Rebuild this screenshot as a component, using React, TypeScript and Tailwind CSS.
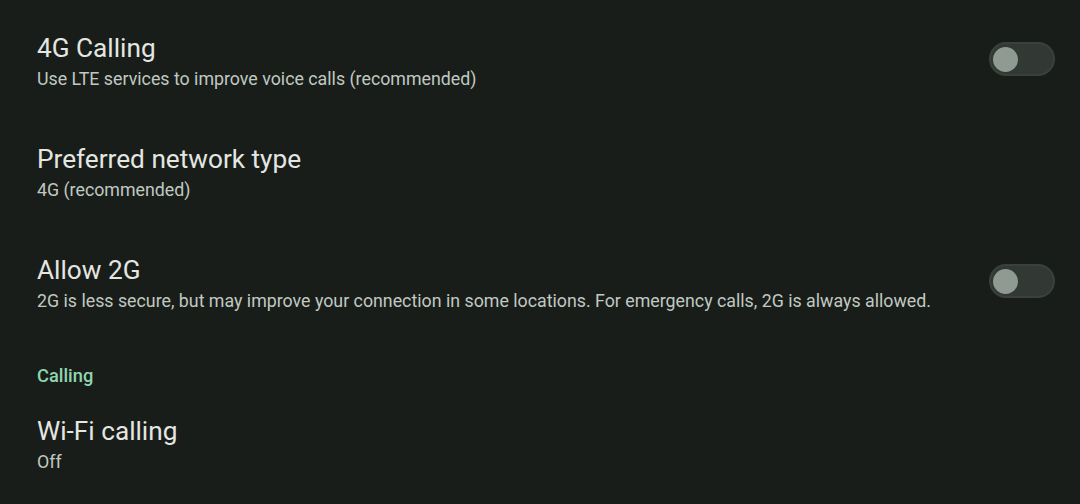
import React from "react";

type Row = { title: string; summary: string; toggle?: boolean };

const NETWORK: Row[] = [
  { title: "4G Calling", summary: "Use LTE services to improve voice calls (recommended)", toggle: true },
  { title: "Preferred network type", summary: "4G (recommended)" },
  {
    title: "Allow 2G",
    summary:
      "2G is less secure, but may improve your connection in some locations. For emergency calls, 2G is always allowed.",
    toggle: true,
  },
];

function Toggle() {
  return (
    <div className="mb-[5px] flex h-[34px] w-[66px] shrink-0 items-center rounded-full border-2 border-[#3a403b] bg-[#323833] pl-[2px]">
      <div className="h-[25px] w-[25px] rounded-full bg-[#8f9a93]" />
    </div>
  );
}

function Pref({ title, summary, toggle }: Row) {
  return (
    <div className="flex h-[111px] items-center justify-between">
      <div className="flex flex-col">
        <span className="text-[26.2px] leading-[32px] text-[#e4e6e1]">{title}</span>
        <span className="mt-[3px] text-[17.8px] leading-[24px] text-[#c0c9c1]">{summary}</span>
      </div>
      {toggle && <Toggle />}
    </div>
  );
}

export default function App() {
  return (
    <div
      className="h-[504px] w-[1080px] overflow-hidden bg-[#191d1a] pl-[37px] pr-[25px] pt-[6px]"
      style={{ fontFamily: "Roboto, 'Noto Sans', sans-serif" }}
    >
      {NETWORK.map((r) => (
        <Pref key={r.title} {...r} />
      ))}
      <div className="pt-[25px] text-[18.3px] font-medium leading-[24px] text-[#8fd6ae]">Calling</div>
      <div className="flex flex-col pt-[27px]">
        <span className="text-[26.2px] leading-[32px] text-[#e4e6e1]">Wi-Fi calling</span>
        <span className="mt-[3px] text-[17.8px] leading-[24px] text-[#c0c9c1]">Off</span>
      </div>
    </div>
  );
}
